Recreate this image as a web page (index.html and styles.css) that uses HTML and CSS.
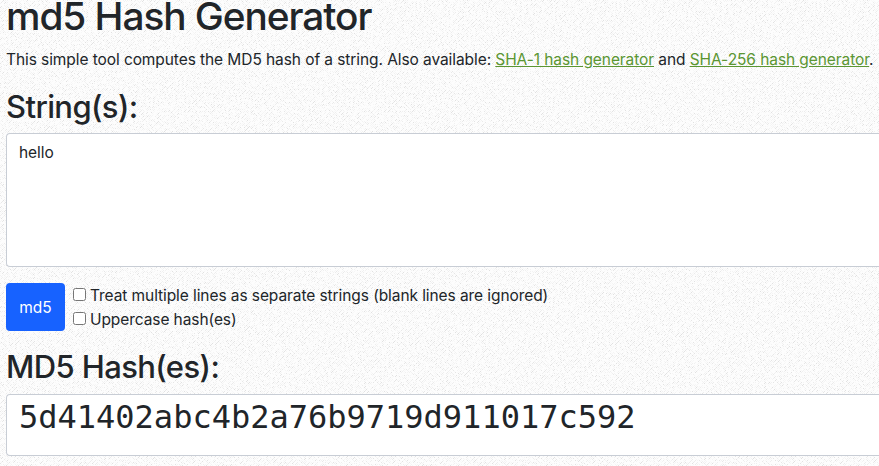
FILE: index.html
```html
<!DOCTYPE html>
<html lang="en">
<head>
<meta charset="utf-8">
<title>md5 Hash Generator</title>
<link rel="stylesheet" href="styles.css">
</head>
<body>
<main class="page">
  <h1 class="title">md5 Hash Generator</h1>
  <p class="intro">This simple tool computes the MD5 hash of a string. Also available: <a href="#">SHA-1 hash generator</a> and <a href="#">SHA-256 hash generator</a>.</p>
  <h2 class="heading heading-strings">String(s):</h2>
  <div class="field field-input">hello</div>
  <div class="actions">
    <button class="submit" type="button">md5</button>
    <div class="options">
      <label class="option"><input type="checkbox"><span>Treat multiple lines as separate strings (blank lines are ignored)</span></label>
      <label class="option"><input type="checkbox"><span>Uppercase hash(es)</span></label>
    </div>
  </div>
  <h2 class="heading heading-hashes">MD5 Hash(es):</h2>
  <div class="field field-output">5d41402abc4b2a76b9719d911017c592</div>
</main>
</body>
</html>
```
FILE: styles.css
```css
* { box-sizing: border-box; }
body {
  margin: 0;
  height: 466px;
  overflow: hidden;
  color: #212529;
  font: 400 15.5px/24px Inter, "Liberation Sans", sans-serif;
  letter-spacing: -0.08px;
  background-color: #fdfdfd;
  background-image: url("data:image/svg+xml,%3Csvg xmlns='http://www.w3.org/2000/svg' width='200' height='200'%3E%3Cdefs%3E%3Cfilter id='n' x='0' y='0' width='100%25' height='100%25'%3E%3CfeTurbulence type='fractalNoise' baseFrequency='.45' numOctaves='3' seed='4' stitchTiles='stitch'/%3E%3CfeColorMatrix values='0 0 0 0 0 0 0 0 0 0 0 0 0 0 0 0 0 0 4 -1.7'/%3E%3CfeComposite in2='SourceGraphic' operator='in'/%3E%3C/filter%3E%3Cpattern id='p' width='4' height='4' patternUnits='userSpaceOnUse'%3E%3Cpath fill-opacity='.11' d='M3 0h1v1h-1zM2 1h1v1h-1zM1 2h1v1h-1zM0 3h1v1h-1z'/%3E%3Cpath fill-opacity='.05' d='M1 0h1v1h-1zM0 1h1v1h-1zM3 2h1v1h-1zM2 3h1v1h-1z'/%3E%3C/pattern%3E%3C/defs%3E%3Crect width='200' height='200' fill='url(%23p)' filter='url(%23n)'/%3E%3C/svg%3E");
}
.page { padding-left: 6px; }
h1, h2, p { margin: 0; white-space: nowrap; }
.title {
  margin-top: -8px;
  font-size: 38.8px;
  line-height: 48px;
  font-weight: 500;
  letter-spacing: -1.05px;
}
.intro { margin-top: 8px; }
.intro a { color: #5b9632; text-decoration: underline; }
.heading { font-size: 31px; line-height: 38px; font-weight: 500; letter-spacing: -0.6px; }
.heading-strings { margin-top: 16px; }
.field {
  border: 1px solid #c8cdd5;
  border-right: 0;
  border-radius: 4px 0 0 4px;
  background: #fff;
}
.field-input { height: 134px; margin-top: 7px; padding: 7px 12px; }
.actions { display: flex; gap: 8px; margin-top: 16px; }
.submit {
  width: 59px;
  height: 48px;
  padding: 2px 0 0;
  border: 0;
  border-radius: 4px;
  background: #1762ff;
  color: #fff;
  font: inherit;
}
.option { display: flex; align-items: center; height: 24px; white-space: nowrap; }
.option input { width: 13px; height: 13px; margin: 0 4px 2px 0; }
.option span { padding-top: 2px; }
.heading-hashes { margin-top: 17px; }
.field-output {
  height: 62px;
  margin-top: 8px;
  padding: 0 12px;
  font: 32px/44px "DejaVu Sans Mono", monospace;
  letter-spacing: 0;
}
```
